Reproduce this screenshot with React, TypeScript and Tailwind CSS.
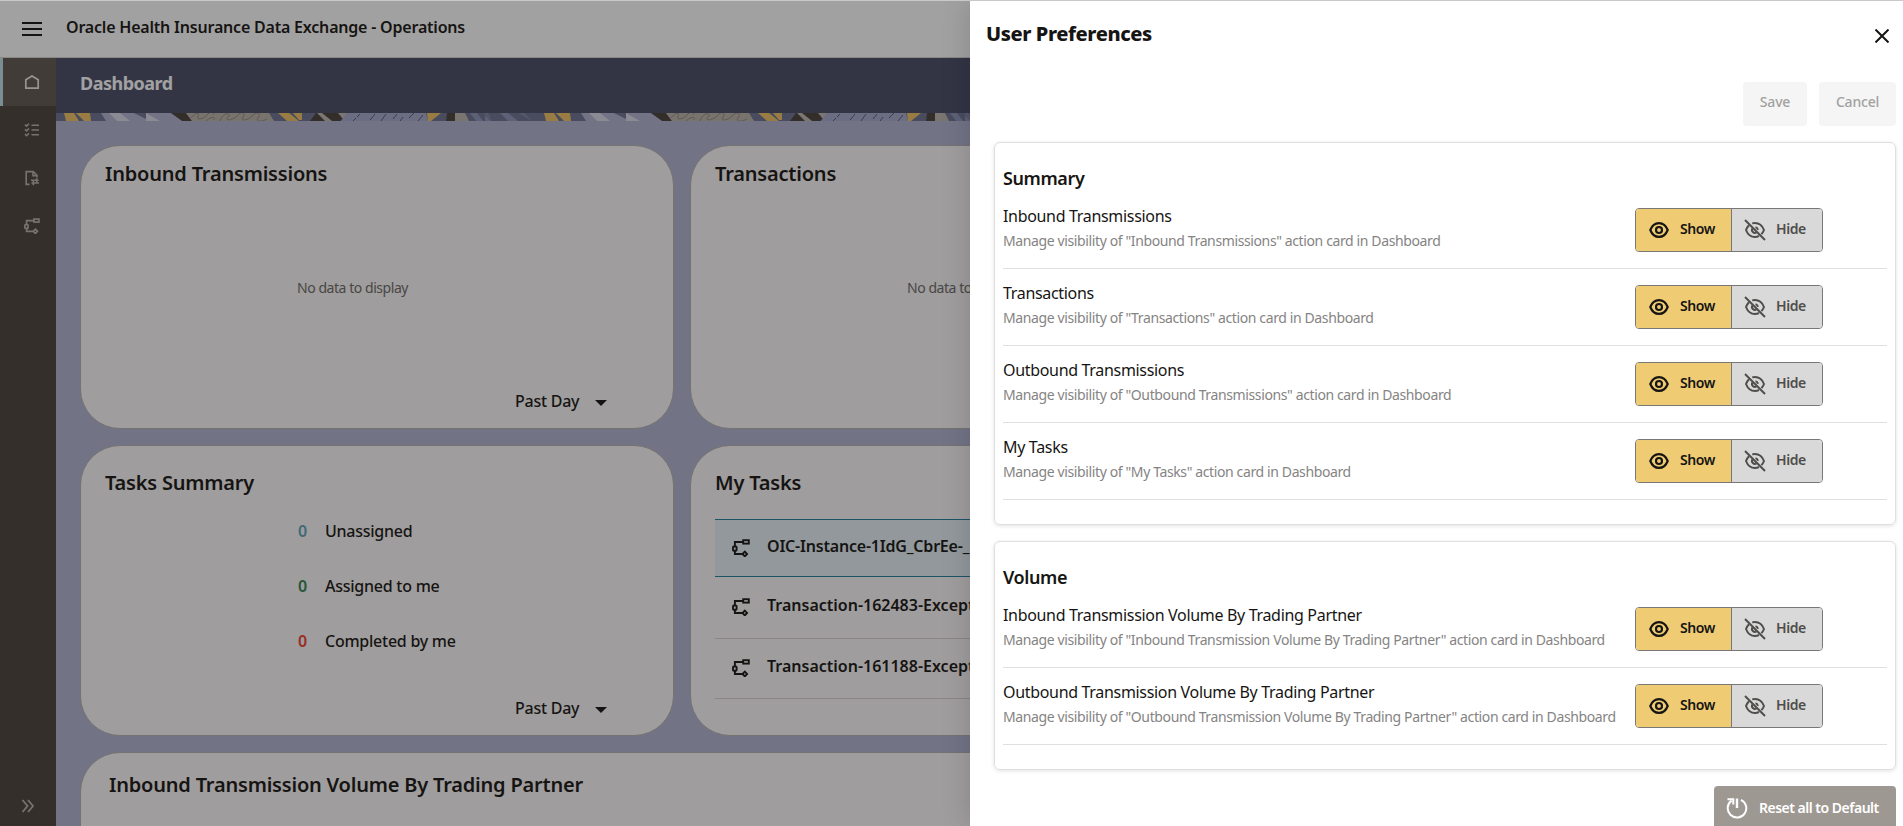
import type { ReactNode } from "react";

type Preference = { title: string };

const summaryPrefs: Preference[] = [
  { title: "Inbound Transmissions" },
  { title: "Transactions" },
  { title: "Outbound Transmissions" },
  { title: "My Tasks" },
];

const volumePrefs: Preference[] = [
  { title: "Inbound Transmission Volume By Trading Partner" },
  { title: "Outbound Transmission Volume By Trading Partner" },
];

const taskCounts = [
  { label: "Unassigned", count: 0, color: "text-[#5ea3bd]" },
  { label: "Assigned to me", count: 0, color: "text-[#2c8450]" },
  { label: "Completed by me", count: 0, color: "text-[#ee3e2e]" },
];

function HomeIcon() {
  return (
    <svg width="16" height="16" viewBox="0 0 16 16" fill="none" stroke="currentColor" strokeWidth="1.7">
      <path d="M1.8 5.7 8 2l6.2 3.7v8.500H1.800z" />
    </svg>
  );
}

function ChecklistIcon() {
  return (
    <svg width="16" height="16" viewBox="0 0 16 16" fill="none" stroke="currentColor" strokeWidth="1.6">
      <path d="M7.500 3.200H15M7.500 8H15M7.500 12.800H15" />
      <path d="M1 2.600l1.600 1.500L5 1.700M1 7.400l1.600 1.500L5 6.500M1 12.200l1.600 1.500L5 11.300" />
    </svg>
  );
}

function FileTransferIcon() {
  return (
    <svg width="16" height="16" viewBox="0 0 16 16" fill="none" stroke="currentColor" strokeWidth="1.6">
      <path d="M5.500 14.400H2.200V1.600H9.300L13 5.300V7.500" />
      <path d="M9 1.800V5.600H13" />
      <path d="M7 10.300H14.600M12.700 8.300v4M15 13H7.400M9.300 11v4.200" />
    </svg>
  );
}

function FlowIcon({ size }: { size: number }) {
  return (
    <svg width={size} height={size} viewBox="0 0 18 18" fill="none" stroke="currentColor" strokeWidth="1.9">
      <path d="M11 3H2.900V7.500M2.900 12V15H10.500" />
      <rect x="11.200" y="1.200" width="5.600" height="3.400" />
      <rect x="1" y="7.500" width="3.600" height="4.200" rx="0.800" />
      <path d="M12.800 12.600l2.300 2.400-2.300 2.400-2.300-2.400z" />
    </svg>
  );
}

function EyeIcon() {
  return (
    <svg width="20" height="18" viewBox="0 0 20 18" fill="none" stroke="currentColor" strokeWidth="2.2">
      <path d="M1.300 9C3 4.600 6.300 2.100 10 2.100S17 4.600 18.700 9C17 13.400 13.700 15.900 10 15.900S3 13.400 1.300 9z" />
      <circle cx="10" cy="9" r="3" />
    </svg>
  );
}

function EyeOffIcon() {
  return (
    <svg width="22" height="22" viewBox="0 0 22 22" fill="none" stroke="currentColor" strokeWidth="2">
      <path d="M1 1l20 20" />
      <path d="M8.200 4.400c.9-.3 1.900-.4 2.800-.4 3.900 0 7.300 2.600 9 7-.6 1.600-1.500 3-2.600 4.100" />
      <path d="M5 6.200C3.700 7.400 2.700 9.100 2 11c1.700 4.400 5.100 7 9 7 1.400 0 2.800-.4 4-1" />
      <path d="M8.400 9.400A3 3 0 0 0 12.500 13.500" />
      <path d="M11.500 8.200A3 3 0 0 1 13.900 10.800" />
    </svg>
  );
}

function ResetIcon() {
  return (
    <svg width="22" height="22" viewBox="0 0 22 22" fill="none" stroke="currentColor" strokeWidth="2">
      <path d="M15 2.800a9.300 9.300 0 1 1-9.400.8" />
      <path d="M1.500 2.200H7.300V7.600" />
      <path d="M11 1.500V11" strokeWidth="2.4" />
    </svg>
  );
}

// 480px tile of the textile banner that runs under the page title
function BannerStrip() {
  return (
    <svg className="block h-2 w-full shrink-0">
      <defs>
        <pattern id="banner" width="480" height="8" patternUnits="userSpaceOnUse">
          <rect width="480" height="8" fill="#6b7291" />
          <path d="M8 0H18L23 8H10z" fill="#f0c263" />
          <path d="M20 0H34L35 8H28z" fill="#f0c263" />
          <path d="M45 0H115L128 8H50z" fill="#b0b5d2" />
          <path d="M53 0H64L74 8H61z" fill="#d9daea" />
          <path d="M78 0H90V6z" fill="#6b7291" />
          <path d="M90 0L104 8H90z" fill="#d9daea" />
          <path d="M115 0H130L136 8H126z" fill="#47403a" />
          <path d="M130 0H213L218 8H136z" fill="#b9b2a9" />
          <path
            d="M135 5c5-6 9-6 7-2s5 4 9-1 9-3 6 0M164 8c3-9 12-9 8-4s6 3 10-2 8-1 5 2 3 5 9-1 9-2 6 2 4 4 9 1M150 8c4-4 10-5 8-1"
            fill="none"
            stroke="#8d877f"
          />
          <path d="M222 0H233L243 8H231z" fill="#f0c263" />
          <path d="M237 0H246V7H243z" fill="#f0c263" />
          <path d="M260 0H292L284 8H254z" fill="#47403a" />
          <path d="M261 0H266L276 8H269z" fill="#bdb8b2" />
          <path d="M282 0H292L287 6z" fill="#bdb8b2" />
          <path d="M292 0H370L372 8H285z" fill="#a3aace" />
          <path
            d="M301 4l3-3M297 8l3-3M314 7l5-6M325 8l5-7M337 6l4-5M344 8l3-4M353 5l5-5M362 8l5-6"
            stroke="#535873"
          />
          <path d="M371 0H385L375 8H372z" fill="#f0c263" />
          <path d="M391 0H399V8H390z" fill="#47403a" />
          <path d="M399 0H409L413 8H399z" fill="#bdb6ad" />
          <path d="M414 0H421L427 8H420zM429 2l6 6H429zM444 0H452L462 8H452z" fill="#8d95b9" />
          <path d="M428 0h4l4 8M463 0h5l8 8" fill="#8087aa" />
        </pattern>
      </defs>
      <rect width="100%" height="8" fill="url(#banner)" />
    </svg>
  );
}

function DashboardCard({ className, children }: { className?: string; children?: ReactNode }) {
  return (
    <section className={`rounded-[40px] border border-[#b5b2af] bg-[#fbf9f8] ${className ?? ""}`}>
      {children}
    </section>
  );
}

function CardTitle({ children }: { children: ReactNode }) {
  return <h2 className="text-[20px] leading-7 font-semibold tracking-[-0.2px] whitespace-nowrap">{children}</h2>;
}

function NoData() {
  return (
    <p className="mt-[90px] mr-[49px] text-center text-[14px] leading-5 tracking-[-0.45px] text-[#6b6967]">
      No data to display
    </p>
  );
}

function PeriodSelect() {
  return (
    <div className="flex items-center pl-[434px] text-[16px] leading-6 font-medium">
      <span className="tracking-[-0.25px]">Past Day</span>
      <span className="mt-[3px] ml-4 h-0 w-0 border-x-[6px] border-t-[6px] border-x-transparent border-t-[#161513]" />
    </div>
  );
}

function TaskRow({ name, className, nameClass }: { name: string; className: string; nameClass?: string }) {
  return (
    <li className={`flex items-center gap-[17px] pb-px pl-[17px] text-[16px] font-semibold ${className}`}>
      <FlowIcon size={18} />
      <span className={`-translate-y-[2px] whitespace-nowrap ${nameClass ?? ""}`}>{name}</span>
    </li>
  );
}

function ShowHideToggle() {
  return (
    <div className="flex h-11 w-[188px] shrink-0 overflow-hidden rounded border border-[#7a7876] text-[14px] font-semibold tracking-[-0.4px]">
      <button className="flex w-[96px] items-center border-r border-[#7a7876] bg-[#efcc73] pl-[13px] text-[#161513]">
        <EyeIcon />
        <span className="ml-[11px] -translate-y-[2px]">Show</span>
      </button>
      <button className="flex flex-1 items-center bg-[#d9d9d9] pl-3 text-[#4f4e4c]">
        <EyeOffIcon />
        <span className="ml-[10px] -translate-y-[2px]">Hide</span>
      </button>
    </div>
  );
}

function PreferenceRow({ title }: Preference) {
  return (
    <li className="flex h-[77px] items-start border-b border-[#dfdfdf] pt-4">
      <div className="w-[632px] whitespace-nowrap">
        <div className="mt-[-4px] text-[16px] leading-6 tracking-[-0.32px]">{title}</div>
        <div className="mt-px text-[14px] leading-6 tracking-[-0.38px] text-[#858483]">
          Manage visibility of "{title}" action card in Dashboard
        </div>
      </div>
      <ShowHideToggle />
    </li>
  );
}

function PreferenceGroup({ heading, items }: { heading: string; items: Preference[] }) {
  return (
    <section className="rounded-md border border-[#dfdfdf] px-2 pt-[22px] pb-6 shadow-[0_1px_4px_rgba(0,0,0,0.12)]">
      <h3 className="h-[27px] pt-px text-[18px] leading-6 font-semibold tracking-[-0.4px]">{heading}</h3>
      <ul>
        {items.map((item) => (
          <PreferenceRow key={item.title} {...item} />
        ))}
      </ul>
    </section>
  );
}

function Sidebar() {
  return (
    <nav className="flex w-14 shrink-0 flex-col bg-[#4a423d] text-[#b5b1ad]">
      <div className="flex h-12 items-center border-l-[3px] border-[#bce0e6] bg-[#5f5852] pl-[21px] text-[#eceae8]">
        <HomeIcon />
      </div>
      <div className="flex h-12 items-center pl-6">
        <ChecklistIcon />
      </div>
      <div className="flex h-12 items-center pl-6">
        <FileTransferIcon />
      </div>
      <div className="flex h-12 items-center pl-6">
        <FlowIcon size={16} />
      </div>
      <div className="mt-auto flex h-[27px] pl-[21px]">
        <svg width="14" height="14" viewBox="0 0 14 14" fill="none" stroke="currentColor" strokeWidth="1.8">
          <path d="M1.500 1l5 6-5 6M7 1l5 6-5 6" />
        </svg>
      </div>
    </nav>
  );
}

function Dashboard() {
  return (
    <div className="flex h-full flex-col">
      <header className="flex h-[57px] shrink-0 items-center border-b border-[#d5d3d1] bg-white pl-[22px]">
        <svg width="20" height="14" viewBox="0 0 20 14" stroke="currentColor" strokeWidth="2">
          <path d="M0 1h20M0 7h20M0 13h20" />
        </svg>
        <h1 className="ml-6 pb-[5px] text-[16px] font-semibold tracking-[-0.2px]">
          Oracle Health Insurance Data Exchange - Operations
        </h1>
      </header>
      <div className="flex min-h-0 flex-1">
        <Sidebar />
        <main className="flex min-w-0 flex-1 flex-col bg-[#afb4d2]">
          <div className="flex h-[55px] shrink-0 items-center bg-[#464a65] pl-6 text-[18px] font-bold tracking-[-0.5px] text-white">
            <span className="-translate-y-[2px]">Dashboard</span>
          </div>
          <BannerStrip />
          <div className="grid grid-cols-[594px_594px] gap-4 pt-6 pl-6">
            <DashboardCard className="h-[284px] pt-[14px]">
              <div className="pl-6">
                <CardTitle>Inbound Transmissions</CardTitle>
              </div>
              <NoData />
              <div className="mt-[91px]">
                <PeriodSelect />
              </div>
            </DashboardCard>
            <DashboardCard className="h-[284px] pt-[14px]">
              <div className="pl-6">
                <CardTitle>Transactions</CardTitle>
              </div>
              <NoData />
            </DashboardCard>
            <DashboardCard className="h-[291px] pt-[23px]">
              <div className="pl-6">
                <CardTitle>Tasks Summary</CardTitle>
              </div>
              <ul className="mt-[6px] text-[16px] font-medium">
                {taskCounts.map((task) => (
                  <li key={task.label} className="flex h-[55px] items-center pl-[217px]">
                    <span className={`w-[27px] font-semibold ${task.color}`}>{task.count}</span>
                    <span className="tracking-[-0.25px]">{task.label}</span>
                  </li>
                ))}
              </ul>
              <div className="mt-[28px]">
                <PeriodSelect />
              </div>
            </DashboardCard>
            <DashboardCard className="h-[291px] pt-[23px] pl-6">
              <CardTitle>My Tasks</CardTitle>
              <ul className="mt-[22px]">
                <TaskRow
                  name="OIC-Instance-1IdG_CbrEe-_"
                  className="h-[58px] border-y border-[#227e9e] bg-[#e4f1f7]"
                  nameClass="tracking-[-0.2px]"
                />
                <TaskRow name="Transaction-162483-Exception" className="h-[62px] border-b border-[#d6d3d0]" />
                <TaskRow name="Transaction-161188-Exception" className="h-[60px] border-b border-[#d6d3d0]" />
              </ul>
            </DashboardCard>
            <DashboardCard className="col-span-2 h-[290px] pt-[18px] pl-7">
              <CardTitle>Inbound Transmission Volume By Trading Partner</CardTitle>
            </DashboardCard>
          </div>
        </main>
      </div>
    </div>
  );
}

function PreferencesDrawer() {
  return (
    <aside className="absolute inset-y-0 right-0 flex w-[933px] flex-col bg-white pr-[7px] shadow-[0_0_28px_rgba(0,0,0,0.16)]">
      <div className="flex h-[81px] shrink-0 items-start justify-between pr-[7px] pl-4">
        <h2 className="pt-[19px] text-[20px] leading-7 font-extrabold tracking-[-0.4px]">User Preferences</h2>
        <svg className="mt-7" width="14" height="14" viewBox="0 0 14 14" stroke="currentColor" strokeWidth="2">
          <path d="M.5.5l13 13M13.500.5l-13 13" />
        </svg>
      </div>
      <div className="flex h-11 shrink-0 justify-end gap-3 text-[14px] font-medium tracking-[-0.2px] text-[#a2a1a0]">
        <button className="w-16 rounded bg-[#f5f5f5] pb-[5px]">Save</button>
        <button className="w-[77px] rounded bg-[#f5f5f5] pb-[5px]">Cancel</button>
      </div>
      <div className="mt-4 flex flex-col gap-4 pl-6">
        <PreferenceGroup heading="Summary" items={summaryPrefs} />
        <PreferenceGroup heading="Volume" items={volumePrefs} />
      </div>
      <button className="mt-4 flex h-11 w-[182px] shrink-0 items-center self-end rounded bg-[#9e9892] pl-3 text-[14px] font-semibold text-white">
        <ResetIcon />
        <span className="ml-[11px] -translate-y-px tracking-[-0.5px] whitespace-nowrap">Reset all to Default</span>
      </button>
    </aside>
  );
}

export default function App() {
  return (
    <div className="h-[826px] w-[1903px] overflow-hidden border-t border-[#c9c9c9] font-['Noto_Sans',sans-serif] text-[#161513]">
      <div className="relative h-[825px] overflow-hidden">
        <Dashboard />
        <div className="absolute inset-0 bg-[rgba(22,21,19,0.4)]" />
        <PreferencesDrawer />
      </div>
    </div>
  );
}
